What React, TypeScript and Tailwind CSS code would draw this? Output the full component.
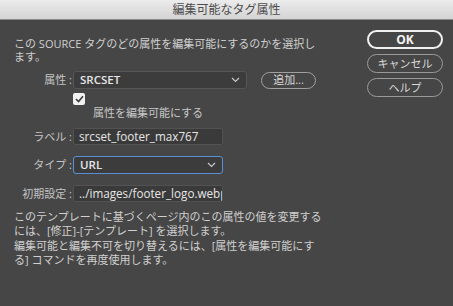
import React from 'react';

const font = { fontFamily: '"Open Sans", "Noto Sans CJK JP", sans-serif' };

function Chevron() {
  return (
    <svg width="9" height="6" viewBox="0 0 9 6" className="shrink-0">
      <path d="M1 1 L4.5 4.5 L8 1" fill="none" stroke="#c8c8c8" strokeWidth="1.2" />
    </svg>
  );
}

function Row({ label, children, className }: { label: string; children: React.ReactNode; className: string }) {
  return (
    <div className={`flex items-center ${className}`}>
      <div className="w-[59px] text-right text-[11px] leading-[14px] text-[#c4c4c4] whitespace-nowrap pr-[1px]">{label}</div>
      {children}
    </div>
  );
}

export default function App() {
  return (
    <div className="w-[453px] h-[306px] bg-[#464646] flex flex-col overflow-hidden" style={font}>
      <div className="h-[20px] shrink-0 bg-gradient-to-b from-[#ececec] to-[#d3d3d3] border-b border-[#8a8a8a] flex items-center justify-center">
        <span className="text-[12px] leading-[16px] text-[#4d4d4d]">編集可能なタグ属性</span>
      </div>

      <div className="flex flex-1">
        <div className="flex-1 pl-[14px] pt-[17px] text-[#d0d0d0]">
          <p className="text-[11px] leading-[13px] whitespace-nowrap">
            この SOURCE タグのどの属性を編集可能にするのかを選択し<br />ます。
          </p>

          <Row label="属性 :" className="mt-[8px]">
            <div className="w-[174px] h-[18px] rounded-[3px] bg-[#3c3c3c] border border-[#555555] flex items-center justify-between pl-[6px] pr-[6px]">
              <span className="text-[11.5px] font-semibold text-[#e6e6e6]">SRCSET</span>
              <Chevron />
            </div>
            <button className="ml-[14px] w-[55px] h-[17px] rounded-full border border-[#a0a0a0] text-[11px] leading-[14px] text-[#d8d8d8]">
              追加...
            </button>
          </Row>

          <div className="ml-[59px] mt-[4px] w-[12px] h-[12px] rounded-[2px] bg-[#f2f2f2] flex items-center justify-center">
            <svg width="9" height="8" viewBox="0 0 9 8">
              <path d="M1 4 L3.5 6.5 L8 1.2" fill="none" stroke="#3a3a3a" strokeWidth="1.6" />
            </svg>
          </div>
          <div className="ml-[79px] mt-[1px] text-[11px] leading-[14px] text-[#c8c8c8]">属性を編集可能にする</div>

          <Row label="ラベル :" className="mt-[8px]">
            <div className="w-[150px] h-[17px] rounded-[2px] bg-[#3a3a3a] border border-[#525252] flex items-center pl-[5px] overflow-hidden">
              <span className="text-[11.7px] text-[#e6e6e6] whitespace-nowrap">srcset_footer_max767</span>
            </div>
          </Row>

          <Row label="タイプ :" className="mt-[11px]">
            <div className="w-[150px] h-[18px] rounded-[3px] bg-[#3c3c3c] border border-[#5b8fd4] flex items-center justify-between pl-[6px] pr-[6px]">
              <span className="text-[11.5px] font-semibold text-[#e6e6e6]">URL</span>
              <Chevron />
            </div>
          </Row>

          <Row label="初期設定 :" className="mt-[11px]">
            <div className="w-[150px] h-[17px] rounded-[2px] bg-[#3a3a3a] border border-[#525252] flex items-center pl-[5px] overflow-hidden">
              <span className="text-[11.7px] text-[#e6e6e6] whitespace-nowrap">../images/footer_logo.webp</span>
            </div>
          </Row>

          <p className="mt-[8px] text-[11px] leading-[14px] whitespace-nowrap">
            このテンプレートに基づくページ内のこの属性の値を変更する<br />には、[修正]-[テンプレート] を選択します。
          </p>
          <p className="mt-[1px] text-[11px] leading-[14px] whitespace-nowrap">
            編集可能と編集不可を切り替えるには、[属性を編集可能にす<br />る] コマンドを再度使用します。
          </p>
        </div>

        <div className="w-[86px] shrink-0 pt-[10px] pr-[10px] flex flex-col">
          <button className="h-[19px] w-[76px] rounded-full border-2 border-[#f0f0f0] text-[12px] font-bold text-[#f4f4f4] leading-[14px]">
            OK
          </button>
          <button className="mt-[5px] h-[19px] w-[76px] rounded-full border border-[#9a9a9a] text-[11px] text-[#d8d8d8] leading-[14px]">
            キャンセル
          </button>
          <button className="mt-[5px] h-[19px] w-[76px] rounded-full border border-[#9a9a9a] text-[11px] text-[#d8d8d8] leading-[14px]">
            ヘルプ
          </button>
        </div>
      </div>
    </div>
  );
}
